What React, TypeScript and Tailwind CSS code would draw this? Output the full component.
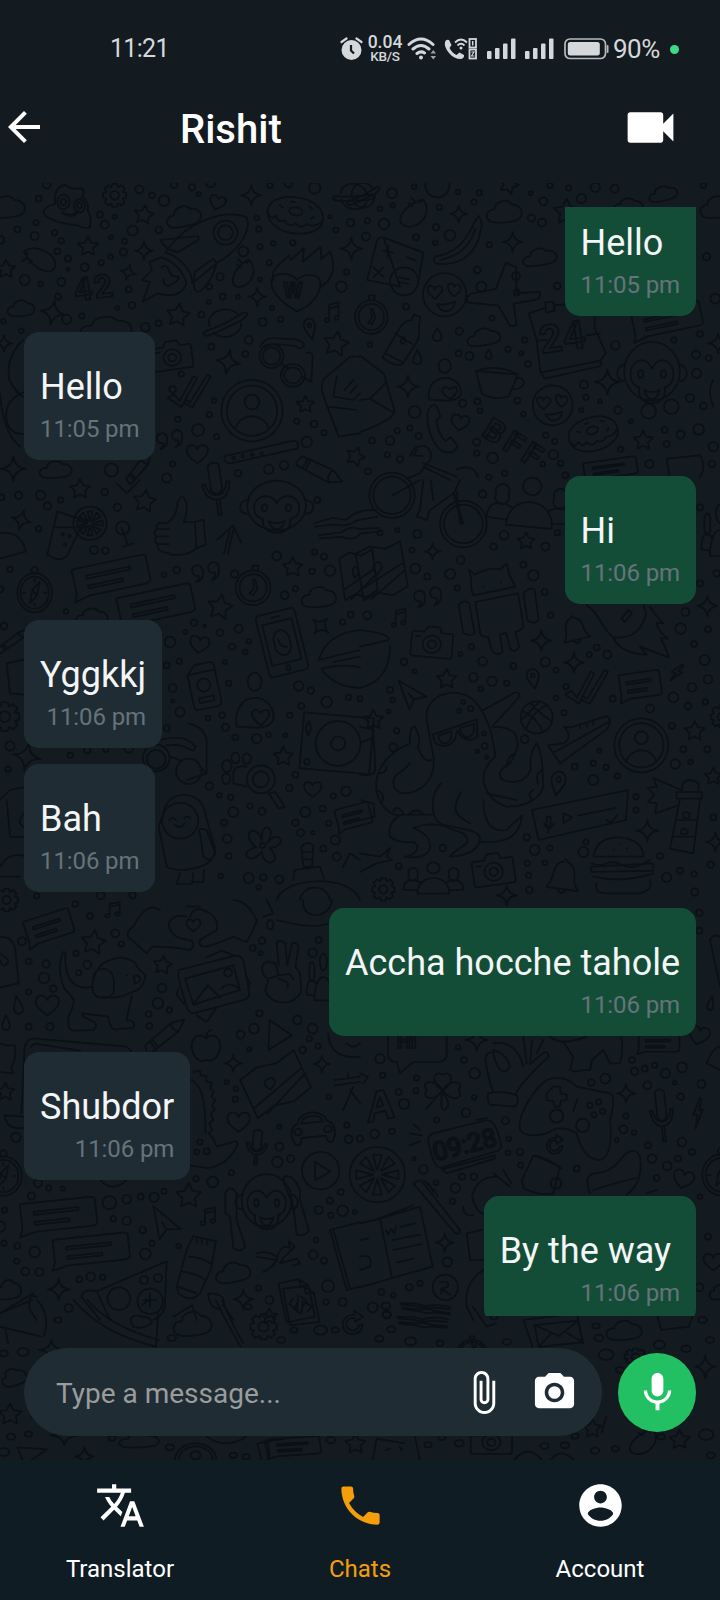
import type { ReactNode } from "react";
import { MdArrowBack, MdPhone, MdVideocam } from "react-icons/md";

/* Doodle outlines, each drawn in a box that runs from -50 to 50. */
const shapes: Record<string, string> = {
  star: "M0-50L15-20 48-15 24 8 29 40 0 25-29 40-24 8-48-15-15-20Z",
  spark: "M0-50Q5-5 50 0Q5 5 0 50Q-5 5-50 0Q-5-5 0-50Z",
  heart: "M0 42C-30 22-52 0-48-20C-44-46-10-48 0-22C10-48 44-46 48-20C52 0 30 22 0 42Z",
  cloud: "M-42 32C-58 14-44-8-28-6C-26-34 8-46 20-22C42-24 54 4 42 22C34 38-32 42-42 32Z",
  drop: "M0-50C14-20 28-5 26 18C22 46-22 46-26 18C-28-5-14-20 0-50Z",
  gear: "M-10-48H10L14-34 28-42 42-28 34-14 48-10V10L34 14 42 28 28 42 14 34 10 48H-10L-14 34-28 42-42 28-34 14-48 10V-10L-34-14-42-28-28-42-14-34ZM18 0A18 18 0 1 1-18 0A18 18 0 1 1 18 0",
  camera: "M-46-24H-20L-12-38H16L22-24H46Q50-24 50-18V32Q50 38 44 38H-44Q-50 38-50 32V-18Q-50-24-46-24ZM22 6A22 22 0 1 1-22 6A22 22 0 1 1 22 6M10 6A10 10 0 1 1-10 6A10 10 0 1 1 10 6M-40-12H-30",
  note: "M-20 34V-34L34-44V24M-20-18L34-28M-20 34A12 9 0 1 1-26 24M34 24A12 9 0 1 1 28 14",
  quote: "M-12-6A17 17 0 1 0-24 8Q-22 20-34 28Q-8 22-12-6ZM38-16A17 17 0 1 0 26-2Q28 12 16 22Q42 14 38-16Z",
  bubble: "M-42-30H42Q48-30 48-24V20Q48 28 40 28H-30L-50 36-46 20V-24Q-48-30-42-30ZM-30-12H26V-6H-30ZM-30 8H14V14H-30Z",
  ticks: "M-50 18L-36 8-24 26 6-40 14-36-20 42ZM-12 22L-2 30 36-44 44-40 4 42-14 32",
  pin: "M0 50C-18 20-34 4-32-18C-28-58 28-58 32-18C34 4 18 20 0 50ZM10-16A10 10 0 1 1-10-16A10 10 0 1 1 10-16",
  face: "M50 0A50 50 0 1 1-50 0A50 50 0 1 1 50 0M-22 10C-44-4-42-22-32-20Q-26-22-24-12Q-18-24-8-18Q2-12-22 10ZM22 4C4-10 4-28 16-26Q20-26 22-18Q28-28 36-20Q42-10 22 4ZM-18 22Q2 26 24 16Q20 40 0 38Q-12 36-18 22Z",
  user: "M50 0A50 50 0 1 1-50 0A50 50 0 1 1 50 0M41 0A41 41 0 1 1-41 0A41 41 0 1 1 41 0M12-14A12 12 0 1 1-12-14A12 12 0 1 1 12-14M-28 30C-18 2 18 2 28 30",
  watch: "M42 6A42 42 0 1 1-42 6A42 42 0 1 1 42 6M33 6A33 33 0 1 1-33 6A33 33 0 1 1 33 6M-6-36V-48H8V-36M-2-14L2 8-8 20 2 24 10 8 4-14Z",
  compass: "M44 6A44 44 0 1 1-44 6A44 44 0 1 1 44 6M36 6A36 36 0 1 1-36 6A36 36 0 1 1 36 6M8-44A8 8 0 1 1-8-44A8 8 0 1 1 8-44M12-18L6 12-12 30-6 0ZM-6 0L6 12M-30 6H-24M24 6H30M0-24V-18M0 30V36",
  planet: "M-34 4A34 34 0 0 1 30-18M34 4A34 34 0 0 1-28 22M-30 12C-60 20-50 34-28 26L34-4C60-22 46-32 30-18Q0 2-30 12",
  donut: "M50 2C50 26 24 36 0 36S-50 22-50-2S-26-36 0-36S50-22 50 2ZM12-8A12 8 0 1 1-12-8A12 8 0 1 1 12-8M-50 0Q-42 18-34 6Q-28 22-18 12Q-10 28 2 16Q14 26 22 14Q40 20 50 2M-30-16L-24-12M-10-26H-4M22-22L28-18M28 2L34-2",
  plane: "M-8-50L8-48 18-6 50-18Q54-10 48-4L18 12 30 46 22 50-2 22-46 30Q-52 22-44 14L-12-4Z",
  phone: "M-36-46C-54-34-44 10-16 34C6 52 34 46 40 32L22 14 6 22Q-14 8-20-18L-8-28-20-48Q-30-52-36-46Z",
  mic: "M-14-50Q0-60 14-50V0Q0 16-14 0ZM-34-14C-34 30 34 30 34-14H26C24 18-24 18-26-14ZM-4 20V50H4V20",
  bell: "M-40 30Q-28 14-26-10Q-22-34-4-36Q0-50 6-36Q26-32 28-8Q28 14 42 30ZM-12 30Q0 50 12 30",
  bolt: "M8-50L-24 6-4 4-12 50 24-14 4-10 18-46Z",
  carrot: "M20-50C60-20 30 50-10 50C-50 50-40 0 0-36ZM0-36L-14-50M20-50L14-36M-20-30L-6-22",
  arrow: "M-40-40L44 8 6 16-8 46ZM6 16L-10-2",
  tri: "M-30-46L44 0-34 44Z",
  tag: "M-10-48L24-48Q30-46 30-38V40Q28 48 20 48H-24Q-30 46-30 38V-30ZM-30-30H30M14-2A14 14 0 1 1-14-2A14 14 0 1 1 14-2M-16 24H16V34H-16Z",
  people: "M12-30A12 14 0 1 1-12-30A12 14 0 1 1 12-30M-30 34C-30-18 30-18 30 34ZM-30-14A9 11 0 1 1-46-14A9 11 0 1 1-30-14M46-14A9 11 0 1 1 30-14A9 11 0 1 1 46-14M-30 26L-56 24C-56-2-38-4-24 6M30 26L56 24C56-2 38-4 24 6",
  bust: "M14-34A14 16 0 1 1-14-34A14 16 0 1 1 14-34M-36 44C-46-20 36-20 38 28Q36 46 0 46ZM12 42C-20 22 0 6 12 20C26 6 42 24 12 42Z",
  fruit: "M50 0A50 50 0 1 1-50 0A50 50 0 1 1 50 0M0-8L-8-36H8ZM6-6L20-32 32-20ZM8 0L38-8V8ZM6 6L32 20 20 32ZM0 8L8 36H-8ZM-6 6L-20 32-32 20ZM-8 0L-38 8V-8ZM-6-6L-32-20-20-32Z",
  ball: "M50 0A50 50 0 1 1-50 0A50 50 0 1 1 50 0M-44-20Q0 0 20 46M-20-46Q10-10 48 12M-34 36Q-10-20 30-38M-48 10Q-20-20 10-50",
  monkey: "M44-8A44 44 0 1 1-44-8A44 44 0 1 1 44-8M0-12C-10-34-36-24-34-2Q-32 14-20 16C-26 48 26 48 20 16Q32 14 34-2C36-24 10-34 0-12ZM-14-4A4 6 0 1 1-22-4A4 6 0 1 1-14-4M22-4A4 6 0 1 1 14-4A4 6 0 1 1 22-4M-12 20Q0 26 12 20Q8 34 0 34Q-8 34-12 20ZM-42-18C-60-18-58 10-42 6M42-18C60-18 58 10 42 6",
  pencil: "M-50 8L-44-8 24-12 50 0 26 14-44 14ZM24-12Q16 0 26 14M-32-9V13M-26-9V13",
  map: "M-46-34L-16-42 14-34 46-42V30L14 40-16 32-46 40ZM-46 22L46-8M-30 40L46 4M-10 4C-28-18 8-22 0-4Z",
  flower: "M10-4C40-40 60 4 16 8C50 40 4 60-2 16C-30 54-60 14-14 6C-54-20-18-56-2-10C-8-56 38-44 10-4ZM6 2A6 6 0 1 1-6 2A6 6 0 1 1 6 2",
  clover: "M0 0C-30-12-24-52 0-36C24-52 30-12 0 0C20-30 56-20 38 0C54 22 20 30 0 0C-20-30-56-20-38 0C-54 22-20 30 0 0C8 20 24 34 4 48C-6 50-4 20 0 0L-40 46",
  thumb: "M-18-8Q2-22 2-44Q12-62 20-40Q22-24 14-10H36L40 34Q20 48-14 44M-18-8Q-44-12-40 2Q-50 8-40 14Q-48 22-38 26Q-42 40-16 42M-40 2H-16M-40 14H-16M-38 27H-16M36-10L54-14 58 28 40 34",
  page: "M-36-46H16L36-28V46H-36ZM16-46V-28H36M-8-6L-20 6-8 18M12-6L24 6 12 18M6-10L-4 22",
  swirl: "M34 0A34 34 0 1 1 6-34V-48L36-28 8-10V-22A22 22 0 1 0 22 0Z",
  fork: "M-50-10L-20-14 0-6Q20-22 50-14M-50-4L-20-2Q0 8 16-2L50-2M-46 12L-10 14Q6 4 18 14L50 18M-46 18L-12 22Q8 34 18 22L50 24",
  cup: "M-44-14L-28 34Q0 46 26 34L40-14ZM-44-14Q0-34 40-14M36-6C60-14 60 20 30 18",
  apple: "M0-24C-20-44-48-26-42 6C-36 40-12 46 0 38C14 46 38 34 42 4C46-28 18-42 0-24ZM0-24Q0-44 16-48",
  record: "M-50-40H50V40H-50ZM34 0A32 32 0 1 1-30 0A32 32 0 1 1 34 0M12 0A10 10 0 1 1-8 0A10 10 0 1 1 12 0M-42-28L-38-18-42-8-46-18ZM-40 26A4 4 0 1 0-40 34A4 4 0 1 0-40 26M50-12L34-4",
  device: "M-32-50H32Q40-50 40-42V42Q40 50 32 50H-32Q-40 50-40 42V-42Q-40-50-32-50ZM-30-34H30V32H-30ZM16 0A16 16 0 1 1-15 0A16 16 0 1 1 16 0M-8-42H8M-6-6Q-4 8 8 8M4 41A4 4 0 1 1-4 41A4 4 0 1 1 4 41",
  car: "M-46 24C-50-4-38-10-32-12C-24-46 24-46 32-12C46-8 48 6 46 24L40 40H30L26 24H-26L-30 40H-40ZM-24-12C-18-34 18-34 24-12ZM-24 8A8 8 0 1 1-40 8A8 8 0 1 1-24 8M40 8A8 8 0 1 1 24 8A8 8 0 1 1 40 8",
  play: "M50 0A50 50 0 1 1-50 0A50 50 0 1 1 50 0M-16-24L26 2-14 26Z",
  envelope: "M-48-32H48V34H-48ZM-48-32L0 8 48-32M-48 34L-14-4M48 34L14-4",
};

type LayerProps = { matrix: string; items?: string; dots?: string; lines?: string; children?: ReactNode };

/* items: "shape x y width rotation[ height]" separated by commas; dots: "x y r" triples. */
function Layer({ matrix, items = "", dots = "", lines, children }: LayerProps) {
  const list = items.split(",").map((s) => s.trim()).filter(Boolean);
  const circles = dots.split(",").map((s) => s.trim()).filter(Boolean);
  return (
    <g transform={matrix}>
      {list.map((item, i) => {
        const [kind, ...rest] = item.split(" ");
        const [x, y, w, r = 0, h = w] = rest.map(Number);
        return (
          <path
            key={i}
            d={shapes[kind]}
            vectorEffect="non-scaling-stroke"
            transform={`translate(${x} ${y}) rotate(${r}) scale(${w / 100} ${h / 100})`}
          />
        );
      })}
      {circles.map((c, i) => {
        const [x, y, r] = c.split(" ").map(Number);
        return <circle key={i} cx={x} cy={y} r={r} vectorEffect="non-scaling-stroke" />;
      })}
      {lines && <path d={lines} vectorEffect="non-scaling-stroke" />}
      {children}
    </g>
  );
}

function Wallpaper() {
  return (
    <svg
      className="absolute inset-0 h-full w-full"
      viewBox="0 183 720 1277"
      preserveAspectRatio="none"
      fill="none"
      stroke="#0a1016"
      strokeWidth="1.7"
      strokeLinejoin="round"
      strokeLinecap="round"
      fontFamily="Roboto, sans-serif"
      fontWeight="700"
    >
      <Layer
        matrix="translate(0 180) scale(.33333)"
        items="cloud 18 80 120 0 90,gear 344 46 72 0,star 432 105 60 10,cloud 552 108 108 -8 84,heart 652 68 50 15,spark 754 46 62 0,donut 886 106 168 8 150,star 264 200 62 0,spark 432 212 54 0,spark 384 277 48 15,star 18 268 58 0,cloud 64 384 84 0 66,spark 158 398 74 10,star 534 406 72 8,spark 772 350 54 0,spark 1054 206 66 0,carrot 118 240 84 -80 100,carrot 728 280 84 0 82,planet 676 430 140 -5 110,planet 1062 50 120 20 100,note 998 398 52 0 70,pin 930 446 52 -10 64,star 1008 492 78 10,camera 516 526 120 -8 112,spark 684 546 74 10,ticks 572 634 138 0 112,user 756 692 184 0,star 916 674 54 0,quote 512 782 90 0,heart 592 822 66 0,spark 40 866 74 0,star 1066 830 60 20,cloud 168 868 100 0 70,pencil 416 864 110 -50 100,spark 12 490 50 0,cloud 320 442 160 0 90,pencil 960 870 150 28 150"
        dots="116 56 9,140 14 12,418 28 12,456 46 9,492 62 16,522 14 10,576 22 10,596 42 6,632 8 14,810 16 8,866 10 12,944 24 17,1052 128 11,1008 150 8,990 110 5,108 128 8,52 148 9,104 168 12,164 158 8,184 182 8,172 214 9,204 236 9,254 262 12,204 268 5,300 104 9,344 110 6,314 134 12,398 152 15,476 150 10,332 172 6,374 184 8,370 216 11,332 230 7,304 248 8,74 300 15,122 312 7,184 306 12,174 350 9,386 328 9,396 376 10,352 384 6,200 418 14,246 408 8,436 442 13,476 430 9,604 404 9,770 114 7,776 148 8,820 190 7,878 188 8,780 200 8,730 214 15,808 248 8,660 290 11,628 320 8,668 350 9,714 350 6,626 366 6,780 298 6,816 384 6,788 426 12,842 418 8,1040 276 8,1024 320 16,634 500 9,746 480 12,736 522 9,544 582 8,518 628 10,642 662 7,628 704 8,534 718 8,594 750 18,650 770 8,518 852 8,334 870 20,500 894 14,714 880 10,806 868 14,852 856 13,920 786 16,890 724 8,942 732 10,972 758 8,64 452 7,10 424 7,0 180 12"
        lines="M480 180L594 168Q600 176 590 182L536 216Q500 214 480 180ZM496 218C560 120 680 86 740 112C754 150 720 210 650 250L576 310C580 276 540 230 496 218ZM676 122A36 36 0 1 0 677 122ZM676 136A22 22 0 1 0 677 136ZM650 250Q634 310 600 334Q580 340 582 310L584 276 640 236ZM484 232L448 246 456 270 426 300 450 306 428 366 472 340Q540 360 560 310Q540 250 484 232ZM484 262Q500 250 506 270T530 290 520 310 490 296M820 300C810 260 850 250 866 226L872 240 912 204 908 246 962 200 964 238 990 214C1010 260 998 300 962 320M890 394C830 360 804 320 818 292C840 274 880 282 890 300C910 280 950 280 960 300C968 340 930 380 890 394ZM130 100Q130 80 166 72Q160 20 196 14Q210 30 240 24Q260 30 246 50Q270 70 262 90Q276 110 270 142Q250 148 232 136Q150 128 130 100ZM190 44A18 22 0 1 0 191 44ZM190 56A8 10 0 1 0 191 56ZM238 58A16 20 0 1 0 239 58ZM238 68A7 9 0 1 0 239 68ZM186 98Q214 114 234 92Q224 120 186 98ZM780 500Q790 476 820 474L886 478Q914 484 912 500Q900 510 886 498L830 492Q800 494 796 502M814 492A36 36 0 1 0 815 492ZM814 502A26 26 0 1 0 815 502ZM878 552A36 34 0 1 0 879 552ZM878 562A26 24 0 1 0 879 562ZM840 552L864 562M906 590L934 606 938 530Q934 512 920 520M1080 530H1050L980 590Q960 600 968 640L982 680 1016 770 1080 760M982 680L1070 690M1010 590L1000 650 1060 660 1080 640M1034 630L1060 600M1050 640L1070 616M676 828L880 782Q900 784 892 806L690 850Q668 848 676 828ZM700 830A4 4 0 1 0 701 830ZM728 824A4 4 0 1 0 729 824ZM756 820A4 4 0 1 0 757 820ZM784 816A4 4 0 1 0 785 816ZM70 480Q16 530 28 600 50 640 70 650M74 636Q10 660 20 720 30 770 80 760M0 640Q10 760 60 800"
      >
        <text x="226" y="364" fontSize="96" letterSpacing="6" strokeWidth="5.100" transform="rotate(-8 228 362)">42</text>
        <text x="850" y="354" fontSize="66" strokeWidth="5.100">W</text>
      </Layer>
      <Layer
        matrix="translate(360 180) scale(.33333)"
        items="carrot 160 98 100 10 88,spark 296 102 52 0,cloud 434 94 110 0 90,spark 458 186 60 0,cloud 540 230 106 -6 70,face 254 344 130 0,plane 430 340 210 15 180,watch 34 404 116 0 120,drop 232 466 50 0 44,drop 172 534 48 0 48,drop 386 524 36 0 32,cloud 372 470 104 -5 70,cup 412 598 150 5 140,spark 144 620 66 0,spark 742 606 76 0,face 578 676 120 0,monkey 876 590 190 0 200,phone 250 750 106 0 150,heart 300 728 56 10,donut 700 762 150 -18 140,star 850 782 60 0,bust 254 602 130 0 130,star 446 14 60 20,cloud 910 40 90 -10 60,cloud 1070 80 100 0 90,planet 10 46 100 0 100,bubble 920 420 220 -12 130,star 620 96 80 0,bubble 750 866 170 -8 90,spark 1074 490 60 0,cloud 806 76 90 0 60"
        dots="232 16 36,96 40 15,162 20 7,60 86 7,98 76 7,72 132 16,22 122 8,18 170 12,168 172 9,228 142 10,270 166 16,226 188 7,238 82 8,342 66 8,358 38 8,294 36 7,512 40 6,514 114 11,546 128 12,550 64 12,570 16 8,626 24 8,664 56 14,706 22 14,764 26 12,1030 16 8,1040 230 11,388 194 8,352 270 10,468 288 12,470 338 9,364 320 15,592 318 10,396 414 8,138 380 9,30 494 7,298 454 11,494 480 8,444 508 8,484 520 6,296 520 9,328 528 12,504 552 9,308 670 11,352 664 9,360 692 7,472 662 9,490 702 7,112 752 8,150 744 8,176 768 9,90 782 13,36 782 9,82 824 8,120 838 10,24 874 9,350 786 11,350 820 8,398 834 16,386 892 8,434 880 8,558 766 8,584 784 8,580 824 14,548 852 7,602 850 8,616 886 9,672 614 12,678 652 8,720 664 6,664 690 6,774 690 11,812 724 6,766 496 13,1020 462 9,942 480 8,1066 356 15,1008 524 12,1046 534 9,1010 580 14,990 654 12,1030 678 10,1016 748 16,962 764 12,914 750 9,920 792 9,1060 800 14,1056 852 10,868 852 12,782 808 8,866 694 22,934 680 22,164 696 18"
        lines="M70 172L190 218 176 300 M120 320L22 300 50 184Q56 170 70 172ZM132 262A42 42 0 1 0 133 262ZM70 212L100 218M86 196L82 234M140 232L168 242M40 262L70 290M70 262L40 292M118 292L148 298M118 306L146 312M356 108Q370 126 362 150C350 230 290 260 228 250Q216 240 224 230C290 220 320 180 344 126ZM346 146C330 200 290 230 240 240M162 404L180 410 176 446Q182 470 168 490L128 552Q100 562 68 532L110 460Q130 420 154 420ZM104 460L156 492M76 520L130 548M130 470Q114 490 130 492Q142 480 130 470M506 400L556 384M582 376L640 370M506 400L530 480 540 570 554 596 722 558V540L738 520 704 444V400M540 578L722 542M530 482L560 480M680 466L720 460M556 366H580L584 392 558 398ZM0 526L72 582 104 694Q100 720 0 756M30 656L76 610M30 656L104 700M0 660L30 656M150 830Q160 790 200 800Q220 820 210 840L180 880 140 896M170 810L160 826 190 828M190 850L290 890M290 868Q340 850 354 890M190 860L270 900M920 836L1020 826Q1040 860 1020 892M920 836L930 896M1060 600Q1040 630 1060 680"
      >
        <text x="544" y="520" fontSize="116" letterSpacing="4" strokeWidth="5.100" transform="rotate(-8 548 516)">24</text>
        <text x="364" y="766" fontSize="92" letterSpacing="14" strokeWidth="5.100" transform="rotate(32 364 762)">BFF</text>
      </Layer>
      <Layer
        matrix="translate(0 480) scale(.33333)"
        items="star 240 28 62 0,star 434 64 70 8,spark 64 120 60 15,thumb 530 144 150 0 180,mic 650 30 120 -8 150,monkey 830 90 200 0 170,fruit 270 130 100 0,compass 104 330 118 0 134,bubble 332 290 240 -12 150,bubble 466 376 240 -12 150,quote 620 280 96 0,watch 760 316 124 5 124,star 878 262 62 0,cloud 958 350 108 0 84,star 660 382 78 10,heart 598 494 60 10,device 846 488 150 -14 190,spark 962 438 60 40,tag 612 618 140 -12 140,bust 764 664 150 0 172,gear 14 710 90 0,record 1010 790 210 5 210,star 850 830 60 0,heart 938 928 54 0,flower 788 1094 130 0,spark 80 830 84 10,fork 1040 130 190 -10 170,map 1076 286 110 -8 170,bubble 1060 1010 110 -15 110,cloud 276 410 100 0 70,pencil 40 480 120 -35 80"
        dots="4 52 9,56 46 11,122 46 14,142 78 11,182 60 8,314 36 10,352 82 11,116 146 8,282 210 12,316 212 10,368 144 20,492 284 7,530 270 10,704 282 11,830 228 13,952 60 9,944 216 8,972 230 9,936 274 9,990 272 16,886 326 8,854 346 12,30 268 8,0 328 10,198 394 7,12 438 10,582 428 10,614 438 4,556 456 6,510 486 16,660 458 10,716 446 12,746 484 7,696 500 10,736 516 7,674 546 6,500 556 9,538 544 8,518 624 12,686 610 8,518 662 5,540 696 14,500 744 9,666 706 9,676 742 11,706 772 9,624 714 7,770 776 14,806 764 7,856 766 6,896 618 14,932 632 10,980 666 16,904 678 9,1046 652 8,1052 404 9,1028 426 8,870 706 8,868 924 10,886 884 9,628 918 11,658 946 7,692 952 8,700 996 15,750 978 8,786 994 11,672 1028 9,682 1076 13,686 1128 9,916 996 15,968 986 9,1000 948 8,1038 934 14,886 1028 10,902 1058 11,938 1058 5,986 1030 8,1006 1080 14,970 1106 9,1010 1130 12,746 1194 15,790 1192 10,838 1198 12,776 1222 7,662 1188 7,30 798 14,210 826 8,262 810 10,318 808 8,386 804 14,24 868 8,398 1246 10,302 1246 12,110 1248 8"
        lines="M172 94L262 124 240 146 202 226Q180 250 142 224ZM162 142H240M188 158A4 4 0 1 0 189 158M208 164A4 4 0 1 0 209 164M194 190A4 4 0 1 0 195 190M364 142L384 196M368 200L400 190M652 178L700 136 722 186M700 150L684 220M690 150L672 220M0 160Q60 150 78 214L0 236M350 10L380 40 420 0M565 730Q612 740 620 780V880L560 900M480 780Q560 760 586 800Q584 820 566 806Q540 790 500 796M468 794A40 40 0 1 0 469 794ZM566 836A38 38 0 1 0 567 836ZM468 810A28 28 0 1 0 469 810ZM510 830L540 840M600 860L620 880M490 1000C500 930 590 930 610 980L646 1110Q640 1150 600 1160 540 1180 500 1160L476 1040ZM540 968A54 54 0 1 0 541 968ZM508 1020Q518 1008 528 1020M552 1016Q562 1004 570 1014M524 1034Q542 1050 554 1030M600 1060Q590 1040 620 1050L646 1120Q630 1150 610 1130ZM540 1180L530 1212H576L580 1180M580 1206H610L612 1170M782 856A42 42 0 1 0 783 856ZM782 874A24 24 0 1 0 783 874ZM806 940L826 936 854 980 836 986ZM740 860Q700 856 700 880V910L740 920M680 840A14 18 0 1 0 681 840M706 818A12 16 0 1 0 707 818M740 820A12 16 0 1 0 741 820M678 880A12 16 0 1 0 679 880M0 960L30 930 80 920M20 960L30 1070 80 1072M70 1000Q50 1030 70 1040M0 1160Q30 1110 80 1130M0 1190L60 1190M20 550L74 538M20 550L30 640 74 644M830 1260C850 1190 1050 1180 1080 1260M880 1200L884 1170 960 1160 972 1196M904 1100Q920 1080 940 1096L936 1160H910ZM908 1116H938M908 1138H938M900 1260C910 1210 980 1210 990 1260M956 540Q980 460 1080 450M956 540L1080 510M964 566Q1030 550 1080 562M964 566Q1000 620 1080 624M1000 546L1080 530M1030 1160L1050 1120 1080 1140"
      />
      <Layer
        matrix="translate(360 480) scale(.33333)"
        items="people 512 76 230 5 190,star 498 184 54 0,spark 218 214 48 0,map 66 274 150 -10 190,quote 206 356 96 0,note 118 414 54 0 64,camera 216 486 124 5 120,spark 544 482 62 0,bell 644 450 96 -14 100,spark 642 548 60 0,pin 520 596 56 -10 60,star 260 598 62 0,arrow 156 642 100 0 100,star 40 720 62 0,ball 530 712 96 0,ticks 684 622 138 0 118,bubble 840 616 130 -8 130,bolt 950 578 60 25 60,user 844 796 162 0,star 1004 754 62 0,spark 1042 378 62 0,pin 594 910 66 10 74,spark 862 1052 64 0,spark 1066 1086 56 0,people 220 1200 160 0 120,camera 400 1168 124 -8 124,gear 70 1228 70 0,bell 610 1190 116 8 124,gear 1086 710 70 0,people 1080 160 100 0 200,spark 440 1246 60 0,star 1060 890 54 0"
        dots="96 46 68,96 46 56,310 132 70,310 132 58,368 42 11,60 158 8,112 150 6,172 162 12,156 210 8,302 240 12,166 266 15,202 290 9,270 282 15,292 324 8,400 200 10,432 166 13,490 254 9,556 200 12,592 158 8,520 286 16,554 336 9,22 406 12,572 406 8,334 500 8,302 522 6,368 544 13,460 558 9,556 546 14,588 570 8,132 546 10,164 574 6,340 592 13,396 604 14,440 610 8,362 626 7,90 630 9,98 660 7,86 694 6,110 752 8,100 802 12,0 656 8,588 654 7,618 620 8,612 698 8,494 778 12,710 502 9,688 524 8,742 524 12,962 446 16,976 396 12,1044 448 9,1020 310 9,1020 82 9,1002 492 9,1034 540 15,996 622 13,1044 598 13,940 652 15,984 678 10,1036 666 8,870 686 12,758 656 9,936 738 9,970 808 9,1042 808 9,946 852 14,992 846 7,718 812 6,644 860 9,700 850 8,738 862 8,772 888 8,700 900 15,828 950 8,828 990 8,1060 1012 9,900 1128 9,1052 1154 10,500 1072 10,524 1110 15,570 1104 8,502 1150 8,554 1148 7,506 1186 8,508 1230 10,670 1116 15,678 1086 8,960 1172 9,920 1192 14,1002 1182 8,1004 1236 11,248 1104 10,116 1158 9,1070 280 10,310 666 6,298 692 6,332 686 8,372 760 6,374 798 9,380 832 5,352 814 5"
        lines="M98 46L180 0M190 0L180 86 170 110 200 120 208 92 280 40 306 132M212 0L220 60M300 0L282 40 310 130M290 36L300 130M326 268L344 284Q390 260 420 268L440 250 448 284 466 320 340 346Q332 330 334 296ZM370 320H371M422 308H423M346 366L474 340 490 436Q490 450 466 456L478 500Q466 520 452 508L438 458 420 464 428 516Q410 530 396 512L384 472 362 466ZM296 376Q310 356 328 370L344 460Q330 470 310 460ZM490 340Q510 318 524 330L536 420Q520 436 502 420ZM0 450Q90 460 86 480L0 500M90 500Q90 600 0 624M200 720C190 640 300 610 350 670C390 720 400 780 406 830Q370 860 370 900Q380 960 440 980C530 980 556 930 548 900Q550 830 530 790Q506 820 512 870Q490 920 430 900Q400 880 450 850Q490 790 460 756 430 736 396 742M364 694L460 640Q480 630 478 650L400 736M200 720L220 830C230 900 180 940 130 940C90 930 90 890 130 870L150 850M164 740Q148 740 150 790Q60 830 50 900C40 960 90 1020 130 1004L214 1004M164 740Q184 770 174 800Q190 850 214 840M244 910C210 940 210 1010 240 1030C280 1050 360 1040 360 1080 350 1130 270 1130 270 1130M304 936C270 990 290 1010 330 1030M120 1006Q80 1030 90 1070Q110 1090 160 1086C190 1100 160 1130 134 1130C200 1140 220 1110 206 1080Q200 1060 160 1044Q220 1020 280 1050Q330 1060 320 1090L270 1126M370 960Q370 1060 440 1050L486 1006Q480 1080 400 1086H360M54 880Q80 880 80 860M50 930Q76 940 66 966M100 994Q110 970 130 1000M150 1000Q170 980 190 1004M380 940L470 960M440 860Q440 830 466 820M520 930Q500 940 516 960M546 870Q524 880 534 910M218 764L350 718 352 770Q330 790 304 770L292 752 284 780Q260 810 226 790ZM236 766L274 754Q278 790 250 790 236 786 236 766ZM300 744L342 732Q346 770 318 772 302 764 300 744ZM564 796L612 790Q640 770 612 740L634 742 740 708Q760 720 740 748L600 850ZM580 818L750 724M660 734V744M680 728V740M700 722V734M516 990L804 930 798 1020 536 1080ZM610 1000V1030L636 1012ZM560 1010H572V1040H560ZM552 1030Q566 1060 582 1030M566 1046V1058M656 1006L766 984M740 1020L752 1028 772 1006M700 1130Q710 1070 780 1072Q850 1080 850 1130ZM694 1150Q720 1160 740 1150T790 1156 870 1140M694 1160V1176L880 1172V1150ZM700 1190Q790 1210 880 1180M710 1210Q700 1240 740 1240H840Q880 1230 870 1200M736 1104H737M760 1110H761M780 1092H781M800 1106H801M968 910Q990 890 1016 910V936H966ZM950 936H1026V956H950ZM960 956L930 1106 1000 1120 1020 956M950 1020H1010M942 1070H1006M970 1000Q980 990 990 1004L988 1014H970ZM964 1050Q974 1040 984 1054L982 1062H964ZM964 930L880 894 890 920 862 924 884 944 864 966 890 970 886 1000 950 978M680 376C720 400 720 440 760 472Q840 480 858 400L850 376M870 380Q880 400 910 430L890 428Q890 450 924 476L902 474Q920 510 926 532L840 500 860 524Q780 520 760 472M784 416L806 390 816 400 794 426ZM0 740L40 750 46 870Q40 890 0 884M0 960L40 970 44 1010 0 1020M0 1120L60 1130 90 1104 80 1130 96 1140 50 1150 0 1176"
      />
      <Layer
        matrix="translate(0 900) scale(.33333)"
        items="bubble 146 82 150 -18 130,note 340 30 56 0 54,star 280 128 76 8,star 488 196 58 8,heart 142 316 72 0,drop 54 318 50 -10 60,drop 18 370 44 0 50,heart 580 76 44 0,pencil 494 404 150 -38 130,apple 618 440 100 0 104,tri 836 406 90 0 100,spark 700 490 52 0,spark 966 492 50 0,star 16 576 56 0,map 828 554 200 -25 170,heart 716 666 70 0,car 938 682 140 -6 120,mic 770 744 90 5 100,play 962 812 112 0,fruit 1132 824 166 0,compass 10 820 126 0 134,star 566 888 78 0,bubble 174 946 240 -6 150,bubble 272 1050 240 -6 140,arrow 496 970 110 10 110,note 626 950 56 0 62,monkey 800 916 170 0 180,cloud 700 1116 108 -6 82,spark 176 1168 64 0,spark 730 1198 60 0,page 890 1200 120 -12 130,people 970 240 90 0 180,cloud 26 1168 80 0 80,star 808 1250 50 0,gear 20 0 70 0"
        dots="226 12 9,270 48 9,346 100 12,364 132 8,66 124 12,86 184 9,138 192 11,132 234 16,160 266 10,86 276 8,228 160 8,262 194 12,236 218 8,486 264 13,474 310 16,446 342 9,508 330 8,448 378 9,86 380 9,150 380 11,786 122 10,758 144 9,782 160 6,956 120 9,938 158 13,778 340 10,892 360 13,938 386 15,762 386 15,722 404 12,748 448 6,908 450 10,928 416 8,954 438 8,986 590 7,680 546 6,708 566 7,706 598 8,838 680 6,48 712 14,838 740 12,832 786 16,872 776 11,694 818 8,600 726 8,620 754 9,590 756 7,588 836 8,638 846 16,114 850 12,146 864 8,188 866 6,94 888 11,14 930 8,328 908 20,380 898 13,422 890 9,462 892 14,492 874 8,340 956 8,380 962 13,428 990 10,456 1030 8,536 1038 7,436 1062 16,12 1030 8,52 1038 9,104 1056 16,50 1084 8,76 1114 12,118 1116 12,238 1138 9,272 1130 13,308 1132 8,206 1224 12,1040 676 8,1046 718 12,1022 876 9,990 902 9,956 930 12,992 946 8,1028 932 16,1064 936 6,948 1020 7,940 1064 13,972 1082 9,776 1164 8,808 1200 12,984 1158 18,978 1206 8,1028 1206 12,432 1140 12,474 1134 12,0 980 16"
        lines="M480 30Q440 0 400 80 380 90 384 110L440 160 456 140Q520 140 570 150 590 130 570 120 510 116 506 70 520 40 560 50M570 50Q580 20 610 30 660 50 650 90L600 120Q590 150 640 134L700 110 740 126Q770 70 770 60 740 0 700 0M560 20H600M190 156Q170 200 190 260C200 280 230 290 218 320L206 350Q200 390 220 392L280 390Q300 370 270 360L250 350 246 340 326 350Q330 400 360 386L400 384Q410 360 380 360L384 340 396 286M196 156Q190 280 280 260M280 240C290 200 310 180 360 172Q410 180 410 200L436 226Q430 270 396 276 350 300 310 290M280 240Q280 200 320 208Q350 220 340 280Q320 300 290 290 270 270 280 240ZM380 226H381M402 230Q416 220 420 234T404 250ZM536 210L710 166Q730 170 732 190L748 280Q748 296 730 300L580 340Q566 340 560 320L534 230ZM556 236L700 196 720 270 580 314ZM580 312L624 256 662 294M664 266Q690 240 720 270M684 206A12 12 0 1 0 685 206M620 172L664 152 700 166M536 264L530 284 552 312M590 346L620 366 650 322M740 230L750 250 744 270M806 236L796 270C810 320 890 320 904 270L900 220 886 200 896 140Q890 124 876 130L862 196 856 130Q840 116 830 128L836 196M806 236L836 226 826 190 804 184Q786 190 786 206Q790 236 806 236M836 226L870 222 880 238M836 236L862 246 864 262M78 436Q80 414 106 416L380 440 394 454M74 436L64 640M92 440Q100 430 112 432L240 452M14 646L72 650M14 646Q20 690 70 684M0 110Q40 110 46 150L56 250 0 262M0 160Q30 180 24 186Q10 210 0 180M0 430L20 436 44 436Q50 480 34 500L40 520 0 516M580 516L600 512 602 526 620 528 618 544 636 548 630 566 642 574 634 590 646 600 636 616 644 630 632 640 640 660 628 670 636 690 626 700 640 716 650 740 700 726Q716 720 712 736 680 800 620 804L570 796M574 540Q620 560 616 700 M300 840Q340 880 380 840M676 880Q690 850 710 880V960L736 1040Q720 1060 700 1044L690 950 676 940ZM852 830Q880 820 900 870V900L926 990Q920 1010 890 1004L880 920 852 850ZM580 1008L648 1024 632 1110 600 1180 Q570 1210 536 1180L530 1160 560 1050ZM566 1070Q600 1070 630 1090M544 1114Q590 1120 616 1140M534 1160L590 1180M590 1010V1030M606 1014V1030M622 1018V1034M770 1070L830 1080Q840 1030 870 1044L866 1024 884 1040 850 1074 840 1090 890 1076 900 1090 880 1096M790 1116Q820 1100 830 1080M770 1060Q800 1050 830 1070M290 1174L500 1084 494 1220Q486 1250 460 1260M244 1190L300 1260M244 1190Q250 1164 290 1174L330 1260M356 1162A34 34 0 1 0 357 1162ZM450 1166A38 38 0 1 0 451 1166ZM430 1200H470M450 1180V1220M624 1180Q680 1180 670 1216L700 1260M624 1180Q630 1230 660 1226M1004 540L1080 530M1004 556L1080 546M1044 520V536M1060 560L1030 630M1050 570L1080 610M990 990L1080 966M990 990L1040 1170 1080 1160M1000 990L1050 1166M800 0L820 40 790 50M810 60A10 14 0 1 0 811 60M830 60Q940 90 986 70M910 0C900 60 990 60 996 0M984 400Q990 480 1080 470M1040 430Q1060 450 1080 430M110 1190Q80 1180 90 1230L110 1260M0 1240L100 1180M520 1250L576 1216 590 1260"
      />
      <Layer
        matrix="translate(360 900) scale(.33333)"
        items="spark 350 420 66 0,clover 248 570 124 0 126,spark 798 580 56 0,mic 906 650 100 -6 150,bolt 1014 640 60 0 90,heart 1016 406 66 15,heart 970 838 64 15,spark 254 1028 54 0,bubble 896 430 130 0 90,compass 1084 816 130 0 140,fork 196 1222 150 5 60,heart 1060 1086 60 0,cloud 1078 1176 60 0,drop 1052 312 36 10 46,swirl 584 738 70 0 70"
        dots="60 476 14,294 442 7,312 480 9,344 520 16,170 534 8,168 572 8,116 576 9,132 612 15,68 526 8,318 638 13,342 592 7,230 660 8,436 662 11,44 702 13,96 694 9,0 716 10,446 716 7,444 758 7,480 756 10,482 796 8,162 776 5,190 808 13,228 848 7,306 830 9,342 830 10,286 864 14,278 904 8,650 806 9,694 548 10,736 536 15,816 480 9,824 514 11,854 506 9,884 496 8,916 520 14,966 502 15,944 548 6,862 556 12,1024 552 12,962 590 10,798 648 8,790 688 12,822 698 7,770 720 6,864 736 9,876 776 13,922 798 13,954 776 9,966 726 13,996 756 9,890 834 9,1020 890 7,1044 1010 9,1018 1162 12,262 1086 14,64 1176 9,100 1186 7,148 1162 10,180 1150 8,38 1222 15,80 1244 12,590 648 20,668 676 20,690 616 8,716 606 8,728 634 8,702 644 8,256 1162 38,1018 38 10,1018 92 9,588 850 16"
        lines="M84 410V470Q90 486 110 486L120 520 160 486H240Q262 480 260 460V410M400 460Q380 450 376 480 390 560 400 574M400 450Q440 460 450 500 440 520 420 510 400 480 400 450M400 430Q470 420 490 500M384 580Q430 570 470 586 480 600 466 620L390 614Q380 600 384 580ZM466 584Q480 550 566 470Q566 450 548 460L510 492M490 410L500 490M510 490L516 420M530 460L550 420M570 410Q600 440 680 410M612 430L640 470 630 510Q650 520 666 510H690L696 480 730 450 750 490H780Q790 460 784 410M480 690C470 640 530 560 560 540Q610 520 650 560 700 570 750 580 770 590 750 660 760 770 720 780 670 780 650 700Q600 670 560 700 500 716 480 690ZM560 580L580 560H600L602 580 620 584V600L602 602 600 620H584L580 604 560 600ZM652 598L640 634M206 730Q200 710 220 700L380 660Q410 660 424 740 420 754 400 756L240 804Q220 800 206 730ZM246 808L404 766V776L260 820ZM350 660L380 654M520 766L600 800 580 880Q540 890 490 864L486 840ZM520 766Q560 770 604 806M690 880Q670 830 700 820 750 820 780 780 820 730 840 770 850 850 800 884M700 870Q760 850 830 834M160 850L180 840 190 850 300 990Q300 1006 286 1000ZM190 840L210 860M206 850L220 876M220 866L234 890M310 920Q310 950 340 946M336 890Q350 830 410 830M336 890Q350 940 370 940M400 820L450 860M430 810L454 850M320 1000L330 1080H370M320 1000L366 990M370 1110Q310 1150 320 1220L340 1260M0 970L60 956 96 1134 0 1162M60 956L180 920 218 1100 96 1134M50 958L160 916M78 990L84 1004 94 986 102 1000 108 980M124 980L164 970M98 1020L180 1004M100 1050L184 1032M110 1088L160 1076M0 1020L24 1016M0 1070Q40 1060 30 1100L0 1110M240 1146H260Q276 1160 244 1166V1180M244 1166L270 1184M24 668L50 574 70 570 104 652 84 656 76 632 44 640 40 664ZM48 622L60 592 70 616ZM0 520L24 530 10 550M160 672L180 690M150 700L186 706M148 736L180 724M1040 490Q1060 440 1080 440M1040 490L1080 510M1050 120L1080 260M1050 120Q1060 100 1080 110M860 880L890 870"
      >
        <text x="110" y="444" fontSize="60" strokeWidth="5.100">HI</text>
        <text x="226" y="784" fontSize="78" fontWeight="400" strokeWidth="5.100" transform="rotate(-14 224 784)">09:28</text>
      </Layer>
      <Layer
        matrix="translate(0 1300) scale(.4592 .33333)"
        items="spark 112 150 54 0 60,gear 574 80 60 0 80,swirl 768 74 64 0 86,cloud 1360 90 80 0 80,fork 920 62 110 5 70,page 656 16 90 -8 120,gear 1384 170 50 0 50,cloud 30 230 60 -20 70,star 22 344 52 0 66,star 1290 386 40 0 60,carrot 1400 424 70 10 80,star 1480 420 46 0 60,camera 1070 420 90 0 110,star 774 432 46 0 64,tri 70 460 80 -20 60,spark 1536 200 44 0 70,spark 140 406 60 0 60,cloud 420 70 86 0 100,bubble 640 440 120 -5 90,envelope 1216 100 100 -8 100,compass 1028 150 70 0 80,spark 184 470 40 0 60,cloud 304 420 90 0 60,user 426 480 90 0 100"
        dots="50 156 12,8 160 9,126 60 8,374 114 9,540 20 8,612 120 9,640 90 8,698 90 14,730 90 8,840 18 10,842 44 9,826 116 9,852 88 9,894 124 12,958 130 8,1076 50 8,1104 126 9,1298 78 8,1304 114 10,1436 134 12,1494 146 10,1320 164 16,1350 210 9,1530 60 9,1546 120 9,24 410 9,62 402 8,76 346 9,8 456 12,244 414 8,370 442 9,508 466 8,536 470 8,720 420 10,932 434 8,962 412 8,1000 430 10,1186 438 9,1230 436 9,1252 408 8,1296 452 9,1340 446 8,1538 404 16,1548 466 9,1440 410 8"
        lines="M0 40L70 0M0 80L90 110M80 0Q110 40 96 108M12 90L18 130M160 0Q220 100 340 140M190 0Q240 80 346 120M344 40L340 140M284 60Q290 40 310 50 330 50 330 70 310 90 290 80ZM470 0Q490 60 524 140M484 0Q500 60 530 130M324 0L310 14M1140 60L1256 40 1270 130M1140 60L1160 140M1030 20L1060 80 1080 70M1430 40L1440 90 1500 80 1510 40M560 430L570 480M576 420L586 480M560 430L620 416M820 416L812 480M820 416L880 430M904 410L914 480M1120 480Q1150 430 1180 480M1200 480Q1220 440 1250 480M840 450L850 446M870 440L876 450M450 410Q490 450 536 410M1310 400L1320 350"
      />
    </svg>
  );
}

function Glyph({ d, className }: { d: string; className: string }) {
  return (
    <svg className={className} viewBox="0 0 24 24" fill="currentColor">
      <path d={d} />
    </svg>
  );
}

const glyphs = {
  translate:
    "M12.87 15.07l-2.54-2.51.03-.03c1.74-1.94 2.98-4.17 3.71-6.53H17V4h-7V2H8v2H1v1.99h11.17C11.5 7.92 10.44 9.75 9 11.35 8.07 10.32 7.3 9.19 6.69 8h-2c.73 1.63 1.73 3.17 2.98 4.56l-5.09 5.02L4 19l5-5 3.11 3.11.76-2.04zM18.5 10h-2L12 22h2l1.12-3h4.75L21 22h2l-4.5-12zm-2.62 7l1.62-4.33L19.12 17h-3.24z",
  account:
    "M12 2C6.48 2 2 6.48 2 12s4.48 10 10 10 10-4.48 10-10S17.52 2 12 2zm0 3c1.66 0 3 1.34 3 3s-1.34 3-3 3-3-1.34-3-3 1.34-3 3-3zm0 14.2c-2.5 0-4.71-1.28-6-3.22.03-1.99 4-3.08 6-3.08 1.99 0 5.97 1.09 6 3.08-1.29 1.94-3.5 3.22-6 3.22z",
  mic: "M12 14c1.66 0 2.99-1.34 2.99-3L15 5c0-1.66-1.34-3-3-3S9 3.34 9 5v6c0 1.66 1.34 3 3 3zm5.3-3c0 3-2.54 5.1-5.3 5.1S6.7 14 6.7 11H5c0 3.41 2.72 6.23 6 6.72V21h2v-3.28c3.28-.48 6-3.3 6-6.72h-1.7z",
  attach:
    "M16.5 6v11.5c0 2.21-1.79 4-4 4s-4-1.79-4-4V5c0-1.38 1.12-2.5 2.500-2.500s2.500 1.120 2.500 2.500v10.500c0 .55-.45 1-1 1s-1-.45-1-1V6H10v9.500c0 1.380 1.120 2.500 2.500 2.500s2.500-1.120 2.500-2.500V5c0-2.210-1.790-4-4-4S7 2.790 7 5v12.500c0 3.040 2.460 5.500 5.500 5.500s5.500-2.460 5.500-5.500V6h-1.500z",
  camera:
    "M15.2 12A3.2 3.2 0 1 1 8.8 12A3.2 3.2 0 1 1 15.2 12M9 2L7.17 4H4c-1.1 0-2 .9-2 2v12c0 1.1.9 2 2 2h16c1.1 0 2-.9 2-2V6c0-1.1-.9-2-2-2h-3.17L15 2H9zm3 15c-2.76 0-5-2.24-5-5s2.24-5 5-5 5 2.24 5 5-2.24 5-5 5z",
};

type Message = { text: string; time: string; mine?: boolean };

const messages: Message[] = [
  { text: "Hello", time: "11:05 pm", mine: true },
  { text: "Hello", time: "11:05 pm" },
  { text: "Hi", time: "11:06 pm", mine: true },
  { text: "Yggkkj", time: "11:06 pm" },
  { text: "Bah", time: "11:06 pm" },
  { text: "Accha hocche tahole", time: "11:06 pm", mine: true },
  { text: "Shubdor", time: "11:06 pm" },
  { text: "By the way ", time: "11:06 pm", mine: true },
];

function Bubble({ text, time, mine }: Message) {
  return (
    <div
      className={
        mine
          ? "flex h-32 shrink-0 flex-col self-end rounded-[15px] bg-[#144d37] px-4 pt-[34px]"
          : "flex h-32 shrink-0 flex-col self-start rounded-[15px] bg-[#202c33] px-4 pt-[34px]"
      }
    >
      <span className="whitespace-pre text-[36px] leading-[42px] text-[#f3f5f6]">{text}</span>
      <span className="mt-[7px] self-end whitespace-pre text-[24px] leading-7 tracking-[-0.1px] text-[#66737b]">{time}</span>
    </div>
  );
}

function Signal() {
  return (
    <svg className="h-[22px] w-[30px]" viewBox="0 0 30 22" fill="#d5d8da">
      <rect x="0" y="13" width="4.5" height="8" rx="1" />
      <rect x="8" y="10" width="4.5" height="11" rx="1" />
      <rect x="16" y="5.5" width="4.5" height="15.5" rx="1" />
      <rect x="24" y="0.5" width="4.5" height="20.5" rx="1" />
    </svg>
  );
}

function StatusBar() {
  return (
    <div className="flex h-[98px] items-center pl-[110px] text-[#d5d8da]">
      <span className="w-[230px] text-[25px] leading-7 tracking-[-0.7px]">11:21</span>
      <svg className="h-6 w-6" viewBox="0 0 24 24" fill="#d5d8da">
        <circle cx="11.5" cy="13" r="10" />
        <path d="M1.500 5L6.500 1.500M16.500 1.500L21.500 5" stroke="#d5d8da" strokeWidth="2.200" strokeLinecap="round" />
        <path d="M11 8V13.500L14 16.500" fill="none" stroke="#131a20" strokeWidth="2.200" />
      </svg>
      <div className="ml-[3px] flex w-[36px] flex-col items-center whitespace-nowrap font-medium">
        <span className="text-[17.500px] leading-[13px]">0.04</span>
        <span className="pt-px text-[13.500px] leading-[12px] tracking-[-0.300px]">KB/S</span>
      </div>
      <svg className="ml-[4px] h-6 w-[31px]" viewBox="0 0 31 24" fill="none" stroke="#d5d8da" strokeWidth="3" strokeLinecap="round">
        <path d="M2 7.500Q14 -3.500 26 7.500M6 12Q14 5 22 12M10 16.500Q14 13.500 17.500 16" />
        <circle cx="14" cy="20.500" r="1.200" fill="#d5d8da" strokeWidth="1.500" />
        <path d="M23.500 16.500L26.300 13 29 16.500ZM23.500 19L26.300 22.500 29 19Z" fill="#9da2a5" stroke="none" />
      </svg>
      <svg className="ml-1.5 h-6 w-[34px]" viewBox="0 0 34 24" fill="#d5d8da">
        <path d="M1 5Q2 2 5 3L7.500 8 5.500 11Q8 16 12.500 18L15.500 15.500 20 18Q20.500 21 17 22Q10 22 5 16T1 5Z" />
        <path d="M11 5.500Q17 -.5 23 5.500M13.500 8.500Q17 5 20.500 8.500" fill="none" stroke="#d5d8da" strokeWidth="1.800" />
        <circle cx="17" cy="11" r="1.500" />
        <rect x="25.500" y="2" width="6.500" height="8.500" fill="none" stroke="#d5d8da" strokeWidth="1.800" />
        <path d="M28.700 4V8.500" stroke="#d5d8da" strokeWidth="1.500" />
        <rect x="25.500" y="12.500" width="6.500" height="9" fill="none" stroke="#d5d8da" strokeWidth="1.800" />
        <path d="M27.300 15H30L27.500 19H30.500" fill="none" stroke="#d5d8da" strokeWidth="1.100" />
      </svg>
      <div className="ml-[9px] flex gap-2">
        <Signal />
        <Signal />
      </div>
      <svg className="ml-[9px] h-6 w-[46px]" viewBox="0 0 46 24">
        <rect x="1" y="2" width="40.500" height="19.500" rx="5" fill="none" stroke="#b7bbbe" strokeWidth="1.700" />
        <rect x="3.800" y="5" width="32" height="13.500" rx="2.500" fill="#d5d8da" />
        <path d="M43.600 9V15" stroke="#b7bbbe" strokeWidth="1.800" strokeLinecap="round" />
      </svg>
      <span className="ml-[3px] w-[53px] text-[26px] leading-7 tracking-[-0.500px]">90%</span>
      <span className="ml-1 h-[9px] w-[9px] rounded-full bg-[#3ddc84]" />
    </div>
  );
}

function Tab({ icon, label, active }: { icon: ReactNode; label: string; active?: boolean }) {
  return (
    <div
      className={
        active
          ? "flex flex-1 flex-col items-center pt-5 text-[#f59e0b]"
          : "flex flex-1 flex-col items-center pt-5 text-white"
      }
    >
      {icon}
      <span className="mt-6 text-[24px] leading-7">{label}</span>
    </div>
  );
}

export default function App() {
  return (
    <div className="flex h-[1600px] w-[720px] flex-col overflow-hidden bg-[#131a20] font-['Roboto',sans-serif]">
      <StatusBar />
      <header className="flex h-[85px] shrink-0 items-start text-white">
        <MdArrowBack className="mt-[5px] h-12 w-12" />
        <h1 className="ml-[132px] mt-[8px] flex-1 text-[40px] font-medium leading-[48px]">Rishit</h1>
        <MdVideocam className="-mt-px mr-[39px] h-[61px] w-[61px]" />
      </header>
      <main className="relative flex h-[1277px] shrink-0 flex-col bg-[#131a20] pt-6">
        <Wallpaper />
        <div className="relative h-[1109px] shrink-0 overflow-hidden px-6">
          <div className="-mt-[19px] flex flex-col gap-4">
            {messages.map((message, i) => (
              <Bubble key={i} {...message} />
            ))}
          </div>
        </div>
        <div className="relative mt-8 flex h-[88px] shrink-0 items-center gap-4 px-6">
          <div className="flex h-[88px] w-[578px] items-center rounded-[44px] bg-[#202c33] pl-8 pr-[24px] text-white">
            <span className="flex-1 pt-[3px] text-[28px] leading-8 text-[#9a9c9e]">Type a message...</span>
            <Glyph d={glyphs.attach} className="mr-6 h-[47px] w-[47px]" />
            <Glyph d={glyphs.camera} className="h-[47px] w-[47px]" />
          </div>
          <div className="flex h-[79px] w-[78px] items-center justify-center rounded-full bg-[#22c063] text-white">
            <Glyph d={glyphs.mic} className="h-[47px] w-[47px]" />
          </div>
        </div>
      </main>
      <nav className="flex h-[140px] shrink-0 bg-[#0f1c24]">
        <Tab icon={<Glyph d={glyphs.translate} className="h-[51px] w-[51px]" />} label="Translator" />
        <Tab icon={<MdPhone className="h-[51px] w-[51px]" />} label="Chats" active />
        <Tab icon={<Glyph d={glyphs.account} className="h-[51px] w-[51px]" />} label="Account" />
      </nav>
    </div>
  );
}
